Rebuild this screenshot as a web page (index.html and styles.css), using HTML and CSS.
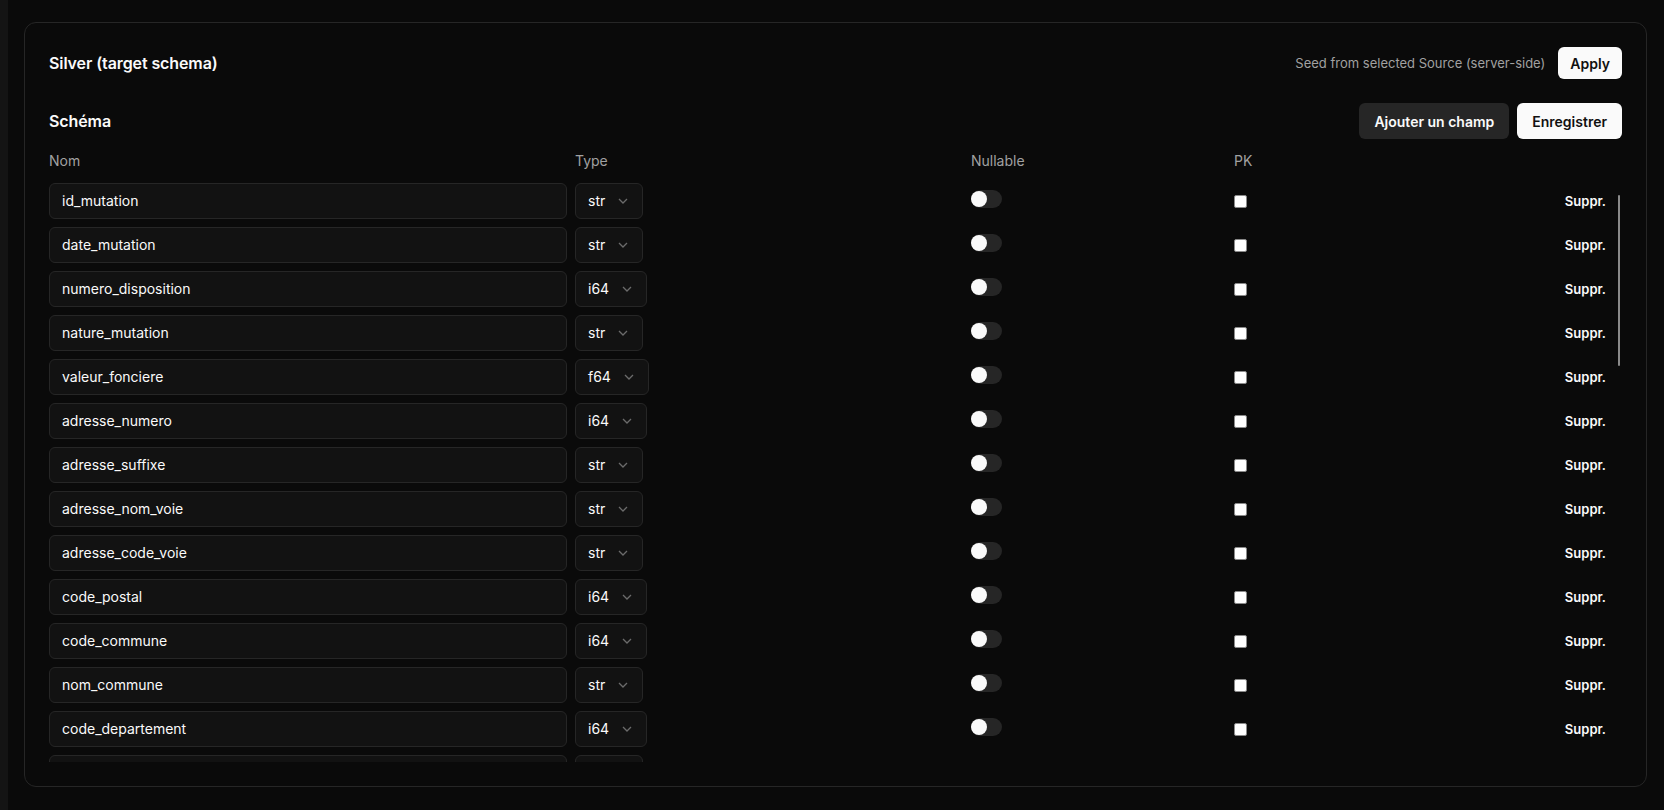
FILE: index.html
```html
<!DOCTYPE html>
<html lang="fr">
<head>
<meta charset="utf-8">
<title>Silver schema</title>
<link rel="stylesheet" href="styles.css">
</head>
<body>
<div class="app">
  <div class="rail"></div>
  <main class="main">
    <section class="card">
      <div class="card-head">
        <h2 class="title">Silver (target schema)</h2>
        <div class="seed">
          <span class="seed-text">Seed from selected Source (server-side)</span>
          <button class="btn btn-light btn-sm">Apply</button>
        </div>
      </div>
      <div class="section-head">
        <h3 class="title">Schéma</h3>
        <div class="actions">
          <button class="btn btn-dark">Ajouter un champ</button>
          <button class="btn btn-light">Enregistrer</button>
        </div>
      </div>
      <div class="grid labels">
        <span>Nom</span><span>Type</span><span>Nullable</span><span>PK</span><span></span>
      </div>
      <div class="list">
        <div class="rows">
          <div class="grid row"><div class="input">id_mutation</div><div class="cell"><div class="select">str<svg class="chev" viewBox="0 0 10 6"><path d="M1 1l4 4 4-4"/></svg></div></div><div class="cell"><span class="toggle"><span class="knob"></span></span></div><div class="cell"><span class="check"></span></div><button class="del">Suppr.</button></div>
          <div class="grid row"><div class="input">date_mutation</div><div class="cell"><div class="select">str<svg class="chev" viewBox="0 0 10 6"><path d="M1 1l4 4 4-4"/></svg></div></div><div class="cell"><span class="toggle"><span class="knob"></span></span></div><div class="cell"><span class="check"></span></div><button class="del">Suppr.</button></div>
          <div class="grid row"><div class="input">numero_disposition</div><div class="cell"><div class="select">i64<svg class="chev" viewBox="0 0 10 6"><path d="M1 1l4 4 4-4"/></svg></div></div><div class="cell"><span class="toggle"><span class="knob"></span></span></div><div class="cell"><span class="check"></span></div><button class="del">Suppr.</button></div>
          <div class="grid row"><div class="input">nature_mutation</div><div class="cell"><div class="select">str<svg class="chev" viewBox="0 0 10 6"><path d="M1 1l4 4 4-4"/></svg></div></div><div class="cell"><span class="toggle"><span class="knob"></span></span></div><div class="cell"><span class="check"></span></div><button class="del">Suppr.</button></div>
          <div class="grid row"><div class="input">valeur_fonciere</div><div class="cell"><div class="select">f64<svg class="chev" viewBox="0 0 10 6"><path d="M1 1l4 4 4-4"/></svg></div></div><div class="cell"><span class="toggle"><span class="knob"></span></span></div><div class="cell"><span class="check"></span></div><button class="del">Suppr.</button></div>
          <div class="grid row"><div class="input">adresse_numero</div><div class="cell"><div class="select">i64<svg class="chev" viewBox="0 0 10 6"><path d="M1 1l4 4 4-4"/></svg></div></div><div class="cell"><span class="toggle"><span class="knob"></span></span></div><div class="cell"><span class="check"></span></div><button class="del">Suppr.</button></div>
          <div class="grid row"><div class="input">adresse_suffixe</div><div class="cell"><div class="select">str<svg class="chev" viewBox="0 0 10 6"><path d="M1 1l4 4 4-4"/></svg></div></div><div class="cell"><span class="toggle"><span class="knob"></span></span></div><div class="cell"><span class="check"></span></div><button class="del">Suppr.</button></div>
          <div class="grid row"><div class="input">adresse_nom_voie</div><div class="cell"><div class="select">str<svg class="chev" viewBox="0 0 10 6"><path d="M1 1l4 4 4-4"/></svg></div></div><div class="cell"><span class="toggle"><span class="knob"></span></span></div><div class="cell"><span class="check"></span></div><button class="del">Suppr.</button></div>
          <div class="grid row"><div class="input">adresse_code_voie</div><div class="cell"><div class="select">str<svg class="chev" viewBox="0 0 10 6"><path d="M1 1l4 4 4-4"/></svg></div></div><div class="cell"><span class="toggle"><span class="knob"></span></span></div><div class="cell"><span class="check"></span></div><button class="del">Suppr.</button></div>
          <div class="grid row"><div class="input">code_postal</div><div class="cell"><div class="select">i64<svg class="chev" viewBox="0 0 10 6"><path d="M1 1l4 4 4-4"/></svg></div></div><div class="cell"><span class="toggle"><span class="knob"></span></span></div><div class="cell"><span class="check"></span></div><button class="del">Suppr.</button></div>
          <div class="grid row"><div class="input">code_commune</div><div class="cell"><div class="select">i64<svg class="chev" viewBox="0 0 10 6"><path d="M1 1l4 4 4-4"/></svg></div></div><div class="cell"><span class="toggle"><span class="knob"></span></span></div><div class="cell"><span class="check"></span></div><button class="del">Suppr.</button></div>
          <div class="grid row"><div class="input">nom_commune</div><div class="cell"><div class="select">str<svg class="chev" viewBox="0 0 10 6"><path d="M1 1l4 4 4-4"/></svg></div></div><div class="cell"><span class="toggle"><span class="knob"></span></span></div><div class="cell"><span class="check"></span></div><button class="del">Suppr.</button></div>
          <div class="grid row"><div class="input">code_departement</div><div class="cell"><div class="select">i64<svg class="chev" viewBox="0 0 10 6"><path d="M1 1l4 4 4-4"/></svg></div></div><div class="cell"><span class="toggle"><span class="knob"></span></span></div><div class="cell"><span class="check"></span></div><button class="del">Suppr.</button></div>
          <div class="grid row"><div class="input">ancien_code_commune</div><div class="cell"><div class="select">str<svg class="chev" viewBox="0 0 10 6"><path d="M1 1l4 4 4-4"/></svg></div></div><div class="cell"><span class="toggle"><span class="knob"></span></span></div><div class="cell"><span class="check"></span></div><button class="del">Suppr.</button></div>
        </div>
        <div class="thumb"></div>
      </div>
    </section>
  </main>
</div>
</body>
</html>
```
FILE: styles.css
```css
* { box-sizing: border-box; }
html, body { margin: 0; height: 100%; }
body {
  background: #0a0a0a;
  color: #fafafa;
  font-family: Inter, "Noto Sans", "Liberation Sans", sans-serif;
  font-size: 14px;
  overflow: hidden;
}
.app { display: flex; height: 810px; }
.rail { width: 8px; background: #141414; flex: none; }
.main {
  flex: 1;
  padding: 22px 17px 23px 16px;
  display: flex;
}
.card {
  flex: 1;
  border: 1px solid #262626;
  border-radius: 12px;
  background: #0a0a0a;
  padding: 24px;
  display: flex;
  flex-direction: column;
  min-height: 0;
}
.card-head {
  height: 32px;
  display: flex;
  align-items: center;
  justify-content: space-between;
}
.title { margin: 0; font-size: 16px; font-weight: 600; letter-spacing: -0.1px; }
.seed { display: flex; align-items: center; gap: 13px; }
.seed-text { color: #a1a1a1; font-size: 13px; }
.section-head {
  margin-top: 24px;
  height: 36px;
  display: flex;
  align-items: center;
  justify-content: space-between;
}
.actions { display: flex; gap: 8px; }
.btn {
  font-family: inherit;
  font-size: 14px;
  font-weight: 600;
  border: 0;
  border-radius: 6px;
  height: 36px;
  padding: 0 15px;
  white-space: nowrap;
  cursor: pointer;
}
.btn-sm { height: 32px; padding: 0 12px; }
.btn-light { background: #fafafa; color: #111; }
.btn-dark { background: #262626; color: #fafafa; }
.grid {
  display: grid;
  grid-template-columns: 518px 388px 255px 1fr auto;
  column-gap: 8px;
  padding-right: 16px;
}
.labels {
  margin-top: 12px;
  line-height: 20px;
  color: #a1a1a1;
  font-size: 14px;
}
.list {
  margin-top: 12px;
  flex: 1;
  min-height: 0;
  overflow: hidden;
  position: relative;
}
.rows { display: flex; flex-direction: column; gap: 8px; }
.row { height: 36px; align-items: center; }
.input {
  height: 36px;
  border: 1px solid #262626;
  border-radius: 6px;
  background: #121212;
  padding: 0 12px 1px;
  display: flex;
  align-items: center;
  font-size: 14px;
}
.cell { display: flex; align-items: center; height: 36px; }
.select {
  height: 36px;
  border: 1px solid #262626;
  border-radius: 6px;
  background: #121212;
  padding: 0 14px 1px 12px;
  display: inline-flex;
  align-items: center;
  gap: 13px;
  font-size: 14px;
}
.chev { width: 10px; height: 6px; fill: none; stroke: #6b6b6b; stroke-width: 1.3; }
.toggle {
  width: 31px;
  height: 18px;
  border-radius: 9px;
  background: #262626;
  position: relative;
  margin-bottom: 4px;
}
.knob {
  position: absolute;
  left: 0;
  top: 1px;
  width: 16px;
  height: 16px;
  border-radius: 50%;
  background: #fafafa;
}
.check {
  width: 13px;
  height: 13px;
  border-radius: 2px;
  background: #ffffff;
  border: 1px solid #8a8a8a;
}
.del {
  background: none;
  border: 0;
  padding: 0 0 1px;
  color: #fafafa;
  font-family: inherit;
  font-size: 13px;
  font-weight: 600;
  justify-self: end;
}
.thumb {
  position: absolute;
  right: 2px;
  top: 12px;
  width: 2px;
  height: 171px;
  background: #8a8a8a;
  border-radius: 1px;
}
```
